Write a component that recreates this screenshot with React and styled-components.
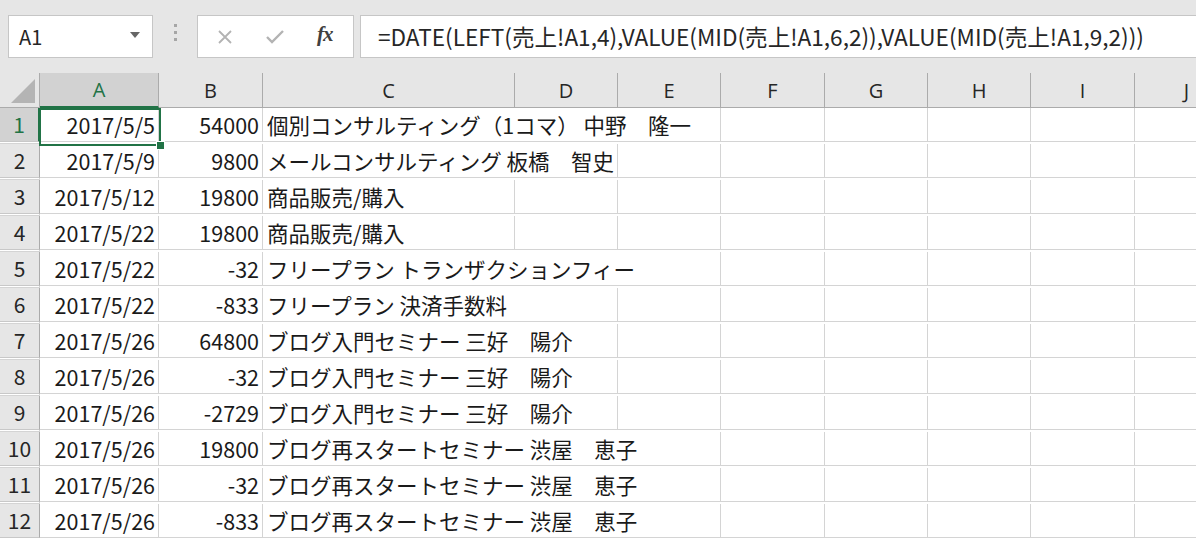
import React from "react"
import styled, { createGlobalStyle } from "styled-components"

const GlobalStyle = createGlobalStyle`
  html, body { margin: 0; padding: 0; background: #ffffff; }
  body { width: 1196px; height: 538px; overflow: hidden; font-family: "Noto Sans CJK JP", "Noto Sans", sans-serif; }
`

const GREEN = "#217346"
const COLS = ["A", "B", "C", "D", "E", "F", "G", "H", "I", "J"]
const TEMPLATE = "40px 119px 104px 252px 103px 103px 104px 103px 103px 104px 104px"

const rows = [
  ["2017/5/5", "54000", "個別コンサルティング（1コマ） 中野　隆一", 3],
  ["2017/5/9", "9800", "メールコンサルティング 板橋　智史", 2],
  ["2017/5/12", "19800", "商品販売/購入", 1],
  ["2017/5/22", "19800", "商品販売/購入", 1],
  ["2017/5/22", "-32", "フリープラン トランザクションフィー", 3],
  ["2017/5/22", "-833", "フリープラン 決済手数料", 2],
  ["2017/5/26", "64800", "ブログ入門セミナー 三好　陽介", 2],
  ["2017/5/26", "-32", "ブログ入門セミナー 三好　陽介", 2],
  ["2017/5/26", "-2729", "ブログ入門セミナー 三好　陽介", 2],
  ["2017/5/26", "19800", "ブログ再スタートセミナー 渋屋　恵子", 3],
  ["2017/5/26", "-32", "ブログ再スタートセミナー 渋屋　恵子", 3],
  ["2017/5/26", "-833", "ブログ再スタートセミナー 渋屋　恵子", 3],
]

const Page = styled.div`
  width: 1196px;
  height: 538px;
  overflow: hidden;
  background: #e6e6e6;
`

const Toolbar = styled.div`
  height: 73px;
  display: flex;
  align-items: center;
  padding: 0 0 0 8px;
  box-sizing: border-box;
`

const NameBox = styled.div`
  width: 145px;
  height: 43px;
  box-sizing: border-box;
  background: #fff;
  border: 1px solid #c6c6c6;
  display: flex;
  align-items: center;
  justify-content: space-between;
  padding: 0 12px 0 10px;
  font-size: 20px;
  color: #262626;
`

const Caret = styled.span`
  width: 0;
  height: 0;
  border-left: 5px solid transparent;
  border-right: 5px solid transparent;
  border-top: 6px solid #666;
  margin-top: -4px;
`

const Grip = styled.div`
  width: 44px;
  display: flex;
  flex-direction: column;
  align-items: center;
  gap: 4px;
  margin-top: -8px;
  span {
    width: 3px;
    height: 3px;
    background: #a6a6a6;
  }
`

const FuncBox = styled.div`
  width: 157px;
  height: 43px;
  box-sizing: border-box;
  background: #fff;
  border: 1px solid #c6c6c6;
  display: flex;
  align-items: center;
  padding-left: 19px;
  gap: 32px;
  svg { display: block; }
`

const FxLabel = styled.span`
  font-family: "Liberation Serif", "DejaVu Serif", serif;
  font-style: italic;
  font-weight: bold;
  font-size: 21px;
  color: #404040;
  letter-spacing: -1px;
  margin-top: -4px;
`

const FormulaBox = styled.div`
  flex: 1;
  height: 43px;
  margin-left: 6px;
  box-sizing: border-box;
  background: #fff;
  border: 1px solid #c6c6c6;
  border-right: none;
  display: flex;
  align-items: center;
  padding-left: 17px;
  font-size: 22.6px;
  color: #262626;
  white-space: nowrap;
  overflow: hidden;
`

const Sheet = styled.div`
  position: relative;
  background: #fff;
`

const Row = styled.div`
  display: grid;
  grid-template-columns: ${TEMPLATE};
  height: ${p => p.$h}px;
`

const HeaderCell = styled.div`
  background: ${p => (p.$sel ? "#d2d2d2" : "#e6e6e6")};
  color: ${p => (p.$sel ? GREEN : "#262626")};
  border-right: 1px solid #ababab;
  border-bottom: ${p => (p.$sel ? `2px solid ${GREEN}` : "1px solid #ababab")};
  box-sizing: border-box;
  display: flex;
  align-items: center;
  justify-content: center;
  font-family: "Open Sans", "Noto Sans", sans-serif;
  font-size: 20px;
`

const Corner = styled.div`
  background: #e6e6e6;
  border-right: 1px solid #ababab;
  border-bottom: 1px solid #ababab;
  box-sizing: border-box;
  display: flex;
  align-items: flex-end;
  justify-content: flex-end;
  padding: 0 4px 4px 0;
  svg { display: block; }
`

const RowHead = styled.div`
  background: ${p => (p.$sel ? "#d2d2d2" : "#e6e6e6")};
  color: ${p => (p.$sel ? GREEN : "#262626")};
  border-right: ${p => (p.$sel ? `2px solid ${GREEN}` : "1px solid #ababab")};
  border-bottom: 1px solid #c8c8c8;
  box-sizing: border-box;
  display: flex;
  align-items: center;
  justify-content: center;
  font-size: 21px;
`

const Cell = styled.div`
  grid-column: span ${p => p.$span || 1};
  border-right: 1px solid #d4d4d4;
  border-bottom: 1px solid #d4d4d4;
  box-sizing: border-box;
  display: flex;
  align-items: center;
  justify-content: ${p => (p.$right ? "flex-end" : "flex-start")};
  padding: ${p => (p.$right ? "0 3px 0 0" : "0 0 0 4px")};
  font-size: 21.5px;
  color: #1a1a1a;
  white-space: nowrap;
  overflow: visible;
  min-width: 0;
`

const Selection = styled.div`
  position: absolute;
  left: 39px;
  top: 35px;
  width: 122px;
  height: 38px;
  box-sizing: border-box;
  border: 2px solid ${GREEN};
  pointer-events: none;
`

const Handle = styled.div`
  position: absolute;
  right: -6px;
  bottom: -6px;
  width: 7px;
  height: 7px;
  background: ${GREEN};
  border: 1px solid #fff;
`

export default function App() {
  return (
    <>
      <GlobalStyle />
      <Page>
        <Toolbar>
          <NameBox>
            A1
            <Caret />
          </NameBox>
          <Grip>
            <span />
            <span />
            <span />
          </Grip>
          <FuncBox>
            <svg width="16" height="16" viewBox="0 0 16 16">
              <path d="M2 2 L14 14 M14 2 L2 14" stroke="#b3b3b3" strokeWidth="1.8" fill="none" />
            </svg>
            <svg width="20" height="16" viewBox="0 0 20 16">
              <path d="M2 8 L7 13 L18 2" stroke="#b3b3b3" strokeWidth="2.4" fill="none" />
            </svg>
            <FxLabel>fx</FxLabel>
          </FuncBox>
          <FormulaBox>=DATE(LEFT(売上!A1,4),VALUE(MID(売上!A1,6,2)),VALUE(MID(売上!A1,9,2)))</FormulaBox>
        </Toolbar>
        <Sheet>
          <Row $h={35}>
            <Corner>
              <svg width="24" height="24" viewBox="0 0 24 24">
                <polygon points="24,0 24,24 0,24" fill="#b4b4b4" />
              </svg>
            </Corner>
            {COLS.map(c => (
              <HeaderCell key={c} $sel={c === "A"}>{c}</HeaderCell>
            ))}
          </Row>
          {rows.map((r, i) => {
            const span = r[3]
            const rest = 8 - (span - 1)
            return (
              <Row key={i} $h={36}>
                <RowHead $sel={i === 0}>{i + 1}</RowHead>
                <Cell $right>{r[0]}</Cell>
                <Cell $right>{r[1]}</Cell>
                <Cell $span={span}>{r[2]}</Cell>
                {Array.from({ length: rest }).map((_, k) => (
                  <Cell key={k} />
                ))}
              </Row>
            )
          })}
          <Selection>
            <Handle />
          </Selection>
        </Sheet>
      </Page>
    </>
  )
}
